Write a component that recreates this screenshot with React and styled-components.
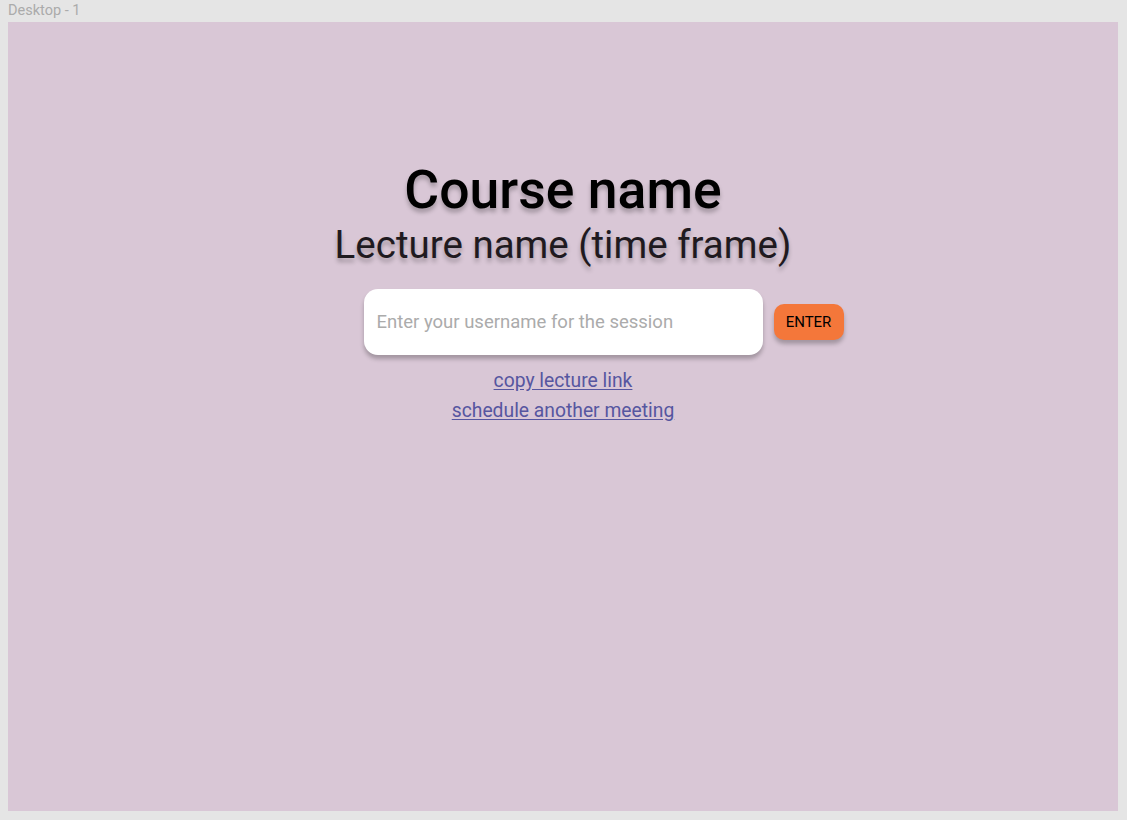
import React from 'react'
import styled, { createGlobalStyle } from 'styled-components'

const GlobalStyle = createGlobalStyle`
  html, body {
    margin: 0;
    padding: 0;
    background: #e5e5e5;
    font-family: Roboto, "Liberation Sans", sans-serif;
  }
`

const Canvas = styled.div`
  width: 1127px;
  height: 820px;
  padding: 0 9px 9px 8px;
  box-sizing: border-box;
  display: flex;
  flex-direction: column;
`

const FrameLabel = styled.div`
  height: 22px;
  line-height: 21px;
  font-size: 14.5px;
  color: #ababab;
  font-family: Roboto, "Liberation Sans", sans-serif;
`

const Frame = styled.main`
  flex: 1;
  background: #d9c7d6;
  display: flex;
  flex-direction: column;
  align-items: center;
  padding-top: 138px;
`

const Title = styled.h1`
  margin: 0;
  font-size: 53.5px;
  font-weight: 500;
  line-height: 60px;
  color: #000;
  text-shadow: 0 4px 4px rgba(0, 0, 0, 0.25);
`

const Subtitle = styled.h2`
  margin: 2px 0 0;
  font-size: 38.5px;
  font-weight: 400;
  line-height: 46px;
  color: #1f1a1f;
  text-shadow: 0 4px 4px rgba(0, 0, 0, 0.25);
`

const EntryRow = styled.form`
  margin-top: 21px;
  width: 100%;
  display: grid;
  grid-template-columns: 1fr auto 1fr;
  align-items: center;
`

const UserInput = styled.input`
  grid-column: 2;
  width: 399px;
  height: 66px;
  box-sizing: border-box;
  border: none;
  outline: none;
  border-radius: 14px;
  background: #fff;
  padding: 0 13px;
  font-family: Roboto, "Liberation Sans", sans-serif;
  font-size: 18.5px;
  color: #333;
  box-shadow: 0 4px 4px rgba(0, 0, 0, 0.25);

  &::placeholder {
    color: #ababab;
  }
`

const EnterButton = styled.button`
  grid-column: 3;
  justify-self: start;
  margin-left: 11px;
  width: 70px;
  height: 36px;
  border: none;
  border-radius: 10px;
  background: #f4773a;
  color: #000;
  font-family: Roboto, "Liberation Sans", sans-serif;
  font-size: 15px;
  box-shadow: 0 4px 4px rgba(0, 0, 0, 0.25);
  cursor: pointer;
`

const Links = styled.div`
  margin-top: 14px;
  display: flex;
  flex-direction: column;
  align-items: center;
  gap: 7px;
`

const TextLink = styled.a`
  font-size: 19.3px;
  line-height: 23px;
  color: #5656a0;
  text-decoration: underline;
  text-underline-offset: 2px;
  cursor: pointer;
`

export default function App() {
  return (
    <>
      <GlobalStyle />
      <Canvas>
        <FrameLabel>Desktop - 1</FrameLabel>
        <Frame>
          <Title>Course name</Title>
          <Subtitle>Lecture name (time frame)</Subtitle>
          <EntryRow onSubmit={(e) => e.preventDefault()}>
            <UserInput type="text" placeholder="Enter your username for the session" />
            <EnterButton type="submit">ENTER</EnterButton>
          </EntryRow>
          <Links>
            <TextLink>copy lecture link</TextLink>
            <TextLink>schedule another meeting</TextLink>
          </Links>
        </Frame>
      </Canvas>
    </>
  )
}
